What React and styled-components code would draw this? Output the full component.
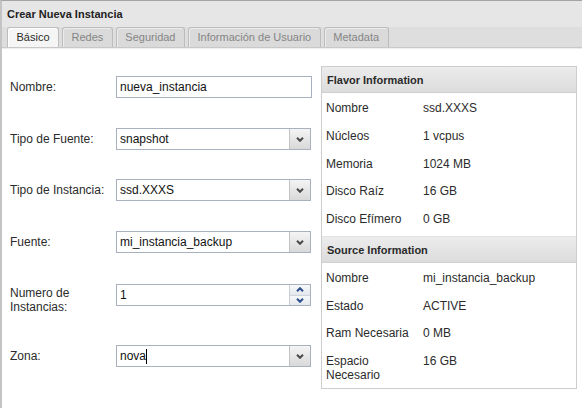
import React from "react"
import styled, { createGlobalStyle } from "styled-components"

const Global = createGlobalStyle`
  body {
    margin: 0;
    background: #ffffff;
    font-family: "Liberation Sans", Arial, sans-serif;
  }
`

const Window = styled.div`
  box-sizing: border-box;
  width: 582px;
  height: 408px;
  overflow: hidden;
  background: #ffffff;
  border-top: 1px solid #a4a4a4;
  border-left: 2px solid #c4c4c4;
  display: flex;
  flex-direction: column;
`

const TitleBar = styled.div`
  height: 26px;
  line-height: 27px;
  padding-left: 5px;
  background: #e6e6e6;
  font-size: 11px;
  font-weight: bold;
  color: #222;
`

const TabStrip = styled.div`
  display: flex;
  align-items: flex-end;
  gap: 3px;
  height: 20px;
  padding-left: 5px;
  background: #dedede;
  border-bottom: 1px solid #c8c8c8;
  box-shadow: 0 1px 0 #eeeeee;
`

const Tab = styled.div`
  box-sizing: border-box;
  height: 20px;
  line-height: 19px;
  padding: 0 8.5px;
  font-size: 11px;
  border: 1px solid #bcbcbc;
  border-bottom: none;
  border-radius: 3px 3px 0 0;
  background: ${p => (p.$active ? "#f5f5f5" : "#dadada")};
  color: ${p => (p.$active ? "#2a2a2a" : "#858585")};
  box-shadow: inset 1px 1px 0 ${p => (p.$active ? "#ffffff" : "#ececec")};
`

const Body = styled.div`
  display: flex;
  align-items: flex-start;
  padding: 18px 0 0 8px;
`

const Form = styled.div`
  width: 302px;
  padding-top: 10px;
  display: flex;
  flex-direction: column;
`

const Row = styled.div`
  display: flex;
  align-items: flex-start;
  margin-bottom: ${p => p.$after}px;
`

const Label = styled.div`
  width: 106px;
  padding-top: ${p => (p.$tight ? 2 : 4)}px;
  font-size: 12px;
  line-height: 14px;
  color: #2b2b2b;
`

const Field = styled.div`
  box-sizing: border-box;
  width: ${p => p.$w || 195}px;
  height: 22px;
  display: flex;
  align-items: stretch;
  border: 1px solid #a9b1be;
  background: #ffffff;
  font-size: 12px;
  color: #111;
`

const Value = styled.div`
  flex: 1;
  display: flex;
  align-items: center;
  padding-left: 3px;
`

const Caret = styled.span`
  display: inline-block;
  width: 1px;
  height: 15px;
  background: #000;
`

const ArrowBox = styled.div`
  width: 20px;
  display: flex;
  align-items: center;
  justify-content: center;
  border-left: 1px solid #c2c2c2;
  background: linear-gradient(#f4f4f4, #d9d9d9);
`

const Spin = styled.div`
  width: 20px;
  display: flex;
  flex-direction: column;
  border-left: 1px solid #c8cdd6;
`

const SpinHalf = styled.div`
  flex: 1;
  display: flex;
  align-items: center;
  justify-content: center;
  background: linear-gradient(#f7f8fa, #e4e7ec);
  & + & {
    border-top: 1px solid #cfd4dc;
  }
`

const Panel = styled.div`
  box-sizing: border-box;
  width: 256px;
  margin-left: 9px;
  border: 1px solid #cdcdcd;
  background: #ffffff;
`

const PanelHead = styled.div`
  height: 25px;
  line-height: 26px;
  padding-left: 5px;
  font-size: 11px;
  font-weight: bold;
  color: #2a2a2a;
  background: linear-gradient(#ececec, #dcdcdc);
  border-bottom: 1px solid #d0d0d0;
  border-top: ${p => (p.$first ? "none" : "1px solid #e2e2e2")};
`

const InfoList = styled.div`
  padding-bottom: ${p => p.$pad}px;
`

const InfoRow = styled.div`
  display: grid;
  grid-template-columns: 97px 1fr;
  padding: 8px 4px 5.75px 4px;
  font-size: 12px;
  line-height: 14px;
  color: #2b2b2b;
`

const Chevron = ({ up, color = "#4a4a4a" }) => (
  <svg width="8" height="5" viewBox="0 0 8 5">
    <path
      d={up ? "M1 4.2 L4 1.2 L7 4.2" : "M1 0.8 L4 3.8 L7 0.8"}
      fill="none"
      stroke={color}
      strokeWidth="2"
    />
  </svg>
)

const Select = ({ children }) => (
  <Field>
    <Value>{children}</Value>
    <ArrowBox>
      <Chevron />
    </ArrowBox>
  </Field>
)

const flavor = [
  ["Nombre", "ssd.XXXS"],
  ["Núcleos", "1 vcpus"],
  ["Memoria", "1024 MB"],
  ["Disco Raíz", "16 GB"],
  ["Disco Efímero", "0 GB"],
]

const source = [
  ["Nombre", "mi_instancia_backup"],
  ["Estado", "ACTIVE"],
  ["Ram Necesaria", "0 MB"],
  ["Espacio Necesario", "16 GB"],
]

const tabs = ["Básico", "Redes", "Seguridad", "Información de Usuario", "Metadata"]

const App = () => (
  <Window>
    <Global />
    <TitleBar>Crear Nueva Instancia</TitleBar>
    <TabStrip>
      {tabs.map((t, i) => (
        <Tab key={t} $active={i === 0}>
          {t}
        </Tab>
      ))}
    </TabStrip>
    <Body>
      <Form>
        <Row $after={30}>
          <Label>Nombre:</Label>
          <Field $w={196}>
            <Value>nueva_instancia</Value>
          </Field>
        </Row>
        <Row $after={29}>
          <Label>Tipo de Fuente:</Label>
          <Select>snapshot</Select>
        </Row>
        <Row $after={30}>
          <Label>Tipo de Instancia:</Label>
          <Select>ssd.XXXS</Select>
        </Row>
        <Row $after={31}>
          <Label>Fuente:</Label>
          <Select>mi_instancia_backup</Select>
        </Row>
        <Row $after={31}>
          <Label $tight>
            Numero de
            <br />
            Instancias:
          </Label>
          <Field>
            <Value>1</Value>
            <Spin>
              <SpinHalf>
                <Chevron up color="#2c4f8c" />
              </SpinHalf>
              <SpinHalf>
                <Chevron color="#2c4f8c" />
              </SpinHalf>
            </Spin>
          </Field>
        </Row>
        <Row $after={0}>
          <Label>Zona:</Label>
          <Field>
            <Value>
              nova
              <Caret />
            </Value>
            <ArrowBox>
              <Chevron />
            </ArrowBox>
          </Field>
        </Row>
      </Form>
      <Panel>
        <PanelHead $first>Flavor Information</PanelHead>
        <InfoList $pad={4}>
          {flavor.map(([k, v]) => (
            <InfoRow key={k}>
              <span>{k}</span>
              <span>{v}</span>
            </InfoRow>
          ))}
        </InfoList>
        <PanelHead>Source Information</PanelHead>
        <InfoList $pad={0}>
          {source.map(([k, v]) => (
            <InfoRow key={k}>
              <span>{k}</span>
              <span>{v}</span>
            </InfoRow>
          ))}
        </InfoList>
      </Panel>
    </Body>
  </Window>
)

export default App
